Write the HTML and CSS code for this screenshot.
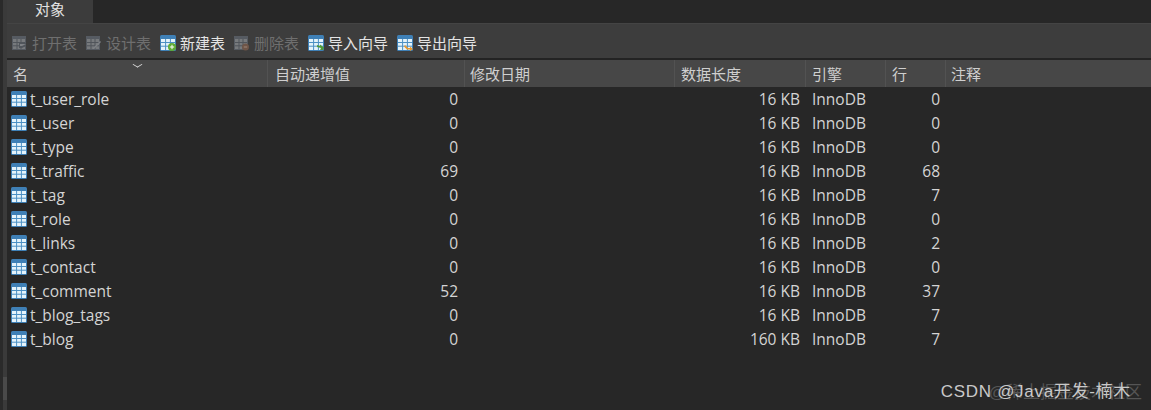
FILE: index.html
```html
<!doctype html>
<html>
<head>
<meta charset="utf-8">
<title>对象</title>
<link rel="stylesheet" href="styles.css">
</head>
<body>
<svg width="0" height="0" class="defs">
	<defs>
		<symbol id="tbl" viewBox="0 0 16 16">
			<rect x="0" y="0" width="16" height="16" rx="1.5" fill="#3f80b6"/>
			<rect x="1" y="4" width="14" height="11" fill="#e4f3fb"/>
			<path d="M1 7.500h14M1 11.200h14M5.600 4v11M10.400 4v11" stroke="#4b90c4" stroke-width="1"/>
		</symbol>
		<symbol id="tbl_off" viewBox="0 0 16 16">
			<rect x="0" y="1" width="14" height="14" fill="#565b62"/>
			<rect x="1" y="4" width="12" height="10" fill="#777a7d"/>
			<path d="M1 7.500h12M1 10.800h12M5 4v10M9 4v10" stroke="#50555b" stroke-width="1"/>
		</symbol>
	</defs>
</svg>
<div class="wrap">
	<div class="side"><div class="side_bar"></div></div>
	<div class="main">
		<div class="tabbar">
			<div class="tab">对象</div>
		</div>
		<div class="toolbar">
			<div class="tool off"><svg class="ico"><use href="#tbl_off"/><path d="M7 8h7v3l-4 2H7z" fill="#50555b"/><path d="M8 9h6l-4 2H8z" fill="#7e8185"/></svg>打开表</div>
			<div class="tool off"><svg class="ico"><use href="#tbl_off"/><path d="M7 13l7-7 1 1-7 7H7z" fill="#7e8185"/></svg>设计表</div>
			<div class="tool"><svg class="ico"><use href="#tbl"/><circle cx="12" cy="12" r="4" fill="#5dab32"/><path d="M12 9.800v4.400M9.800 12h4.400" stroke="#fff" stroke-width="1"/></svg>新建表</div>
			<div class="tool off"><svg class="ico"><use href="#tbl_off"/><circle cx="11.500" cy="12" r="3.500" fill="#6e5548"/><path d="M9.800 12h3.400" stroke="#a08878" stroke-width="1"/></svg>删除表</div>
			<div class="tool"><svg class="ico"><use href="#tbl"/><path d="M9 10l3 1v-1.500l4 3-1 2.500h-3l1-2-4-1z" fill="#4f9a36"/></svg>导入向导</div>
			<div class="tool"><svg class="ico"><use href="#tbl"/><path d="M8 10l3 3h2v-1.500l3 2.500-3 2v-1.500h-3l-3-3z" fill="#e8972c"/></svg>导出向导</div>
		</div>
		<div class="sep"></div>
		<div class="head">
			<div class="c c_name">名<span class="sort"></span></div>
			<div class="c c_auto">自动递增值</div>
			<div class="c c_date">修改日期</div>
			<div class="c c_len">数据长度</div>
			<div class="c c_eng">引擎</div>
			<div class="c c_rows">行</div>
			<div class="c c_note">注释</div>
		</div>
		<div class="list">
			<div class="row"><div class="c_name"><svg class="ico"><use href="#tbl"/></svg>t_user_role</div><div class="c_auto">0</div><div class="c_date"></div><div class="c_len">16 KB</div><div class="c_eng">InnoDB</div><div class="c_rows">0</div></div>
			<div class="row"><div class="c_name"><svg class="ico"><use href="#tbl"/></svg>t_user</div><div class="c_auto">0</div><div class="c_date"></div><div class="c_len">16 KB</div><div class="c_eng">InnoDB</div><div class="c_rows">0</div></div>
			<div class="row"><div class="c_name"><svg class="ico"><use href="#tbl"/></svg>t_type</div><div class="c_auto">0</div><div class="c_date"></div><div class="c_len">16 KB</div><div class="c_eng">InnoDB</div><div class="c_rows">0</div></div>
			<div class="row"><div class="c_name"><svg class="ico"><use href="#tbl"/></svg>t_traffic</div><div class="c_auto">69</div><div class="c_date"></div><div class="c_len">16 KB</div><div class="c_eng">InnoDB</div><div class="c_rows">68</div></div>
			<div class="row"><div class="c_name"><svg class="ico"><use href="#tbl"/></svg>t_tag</div><div class="c_auto">0</div><div class="c_date"></div><div class="c_len">16 KB</div><div class="c_eng">InnoDB</div><div class="c_rows">7</div></div>
			<div class="row"><div class="c_name"><svg class="ico"><use href="#tbl"/></svg>t_role</div><div class="c_auto">0</div><div class="c_date"></div><div class="c_len">16 KB</div><div class="c_eng">InnoDB</div><div class="c_rows">0</div></div>
			<div class="row"><div class="c_name"><svg class="ico"><use href="#tbl"/></svg>t_links</div><div class="c_auto">0</div><div class="c_date"></div><div class="c_len">16 KB</div><div class="c_eng">InnoDB</div><div class="c_rows">2</div></div>
			<div class="row"><div class="c_name"><svg class="ico"><use href="#tbl"/></svg>t_contact</div><div class="c_auto">0</div><div class="c_date"></div><div class="c_len">16 KB</div><div class="c_eng">InnoDB</div><div class="c_rows">0</div></div>
			<div class="row"><div class="c_name"><svg class="ico"><use href="#tbl"/></svg>t_comment</div><div class="c_auto">52</div><div class="c_date"></div><div class="c_len">16 KB</div><div class="c_eng">InnoDB</div><div class="c_rows">37</div></div>
			<div class="row"><div class="c_name"><svg class="ico"><use href="#tbl"/></svg>t_blog_tags</div><div class="c_auto">0</div><div class="c_date"></div><div class="c_len">16 KB</div><div class="c_eng">InnoDB</div><div class="c_rows">7</div></div>
			<div class="row"><div class="c_name"><svg class="ico"><use href="#tbl"/></svg>t_blog</div><div class="c_auto">0</div><div class="c_date"></div><div class="c_len">160 KB</div><div class="c_eng">InnoDB</div><div class="c_rows">7</div></div>
		</div>
	</div>
</div>
<div class="mark mark_back">@稀土掘金技术社区</div>
<div class="mark">CSDN @Java开发-楠木</div>
</body>
</html>
```
FILE: styles.css
```css
*{ margin:0; padding:0; box-sizing:border-box;}
html,body{ width:1151px; height:410px; overflow:hidden; background:#272727;}
body{ font-family:"Noto Sans CJK SC","Open Sans",sans-serif; font-size:15px; color:#d2d2d2;}
.defs{ display:block; height:0;}

.wrap{ display:flex; height:410px;}
.side{ width:7px; flex:none; background:#3a3a3a; border-left:3px solid #2a2a2a; padding-top:377px;}
.side_bar{ height:23px; background:#4a4a4a;}
.main{ flex:1; min-width:0; display:flex; flex-direction:column;}

.tabbar{ height:23px; flex:none; background:#272727; display:flex;}
.tab{ width:86px; background:#3c3c3c; text-align:center; line-height:17px; color:#e2e2e2;}

.toolbar{ height:35px; flex:none; background:#3d3d3d; border-top:1px solid #444; display:flex; align-items:center; padding:4px 0 0 5px; gap:9px;}
.tool{ display:flex; align-items:center; gap:4px; color:#e4e4e4; line-height:20px;}
.tool.off{ color:#6f6f6f;}
.ico{ width:16px; height:16px; flex:none; overflow:visible;}

.sep{ height:2px; flex:none; background:#232323;}

.head{ height:27px; flex:none; background:#474747; display:flex; line-height:28px; color:#cfcfcf;}
.head .c{ padding-left:6px; border-right:1px solid #525252;}
.head .c_auto{ padding-left:7px;}
.head .c_date,.head .c_note{ padding-left:5px;}
.head .c_note{ border-right:none;}
.c_name{ width:261px; flex:none; position:relative;}
.c_auto{ width:197px; flex:none;}
.c_date{ width:210px; flex:none;}
.c_len{ width:131px; flex:none;}
.c_eng{ width:80px; flex:none;}
.c_rows{ width:60px; flex:none;}
.c_note{ flex:1;}
.sort{ position:absolute; left:127px; top:1px; width:7px; height:7px; border-right:1px solid #ddd; border-bottom:1px solid #ddd; transform:scaleY(.6) rotate(45deg);}

.list{ flex:1; background:#272727;}
.row{ height:24px; display:flex; line-height:25px; font-family:"Open Sans",sans-serif; font-size:15.500px; color:#d4d4d4; white-space:nowrap;}
.row .c_name{ display:flex; align-items:center; padding-left:4px; gap:3px;}
.row .c_auto{ text-align:right; padding-right:7px;}
.row .c_len{ text-align:right; padding-right:6px;}
.row .c_eng{ padding-left:6px;}
.row .c_rows{ text-align:right; padding-right:6px;}

.mark{ position:absolute; right:20px; top:381px; font-family:"Liberation Sans","Noto Sans CJK SC",sans-serif; font-size:17px; letter-spacing:.7px; line-height:22px; color:#c9c9c9; white-space:nowrap;}
.mark_back{ right:9px; top:382px; font-size:17px; letter-spacing:0; color:#555;}
```
